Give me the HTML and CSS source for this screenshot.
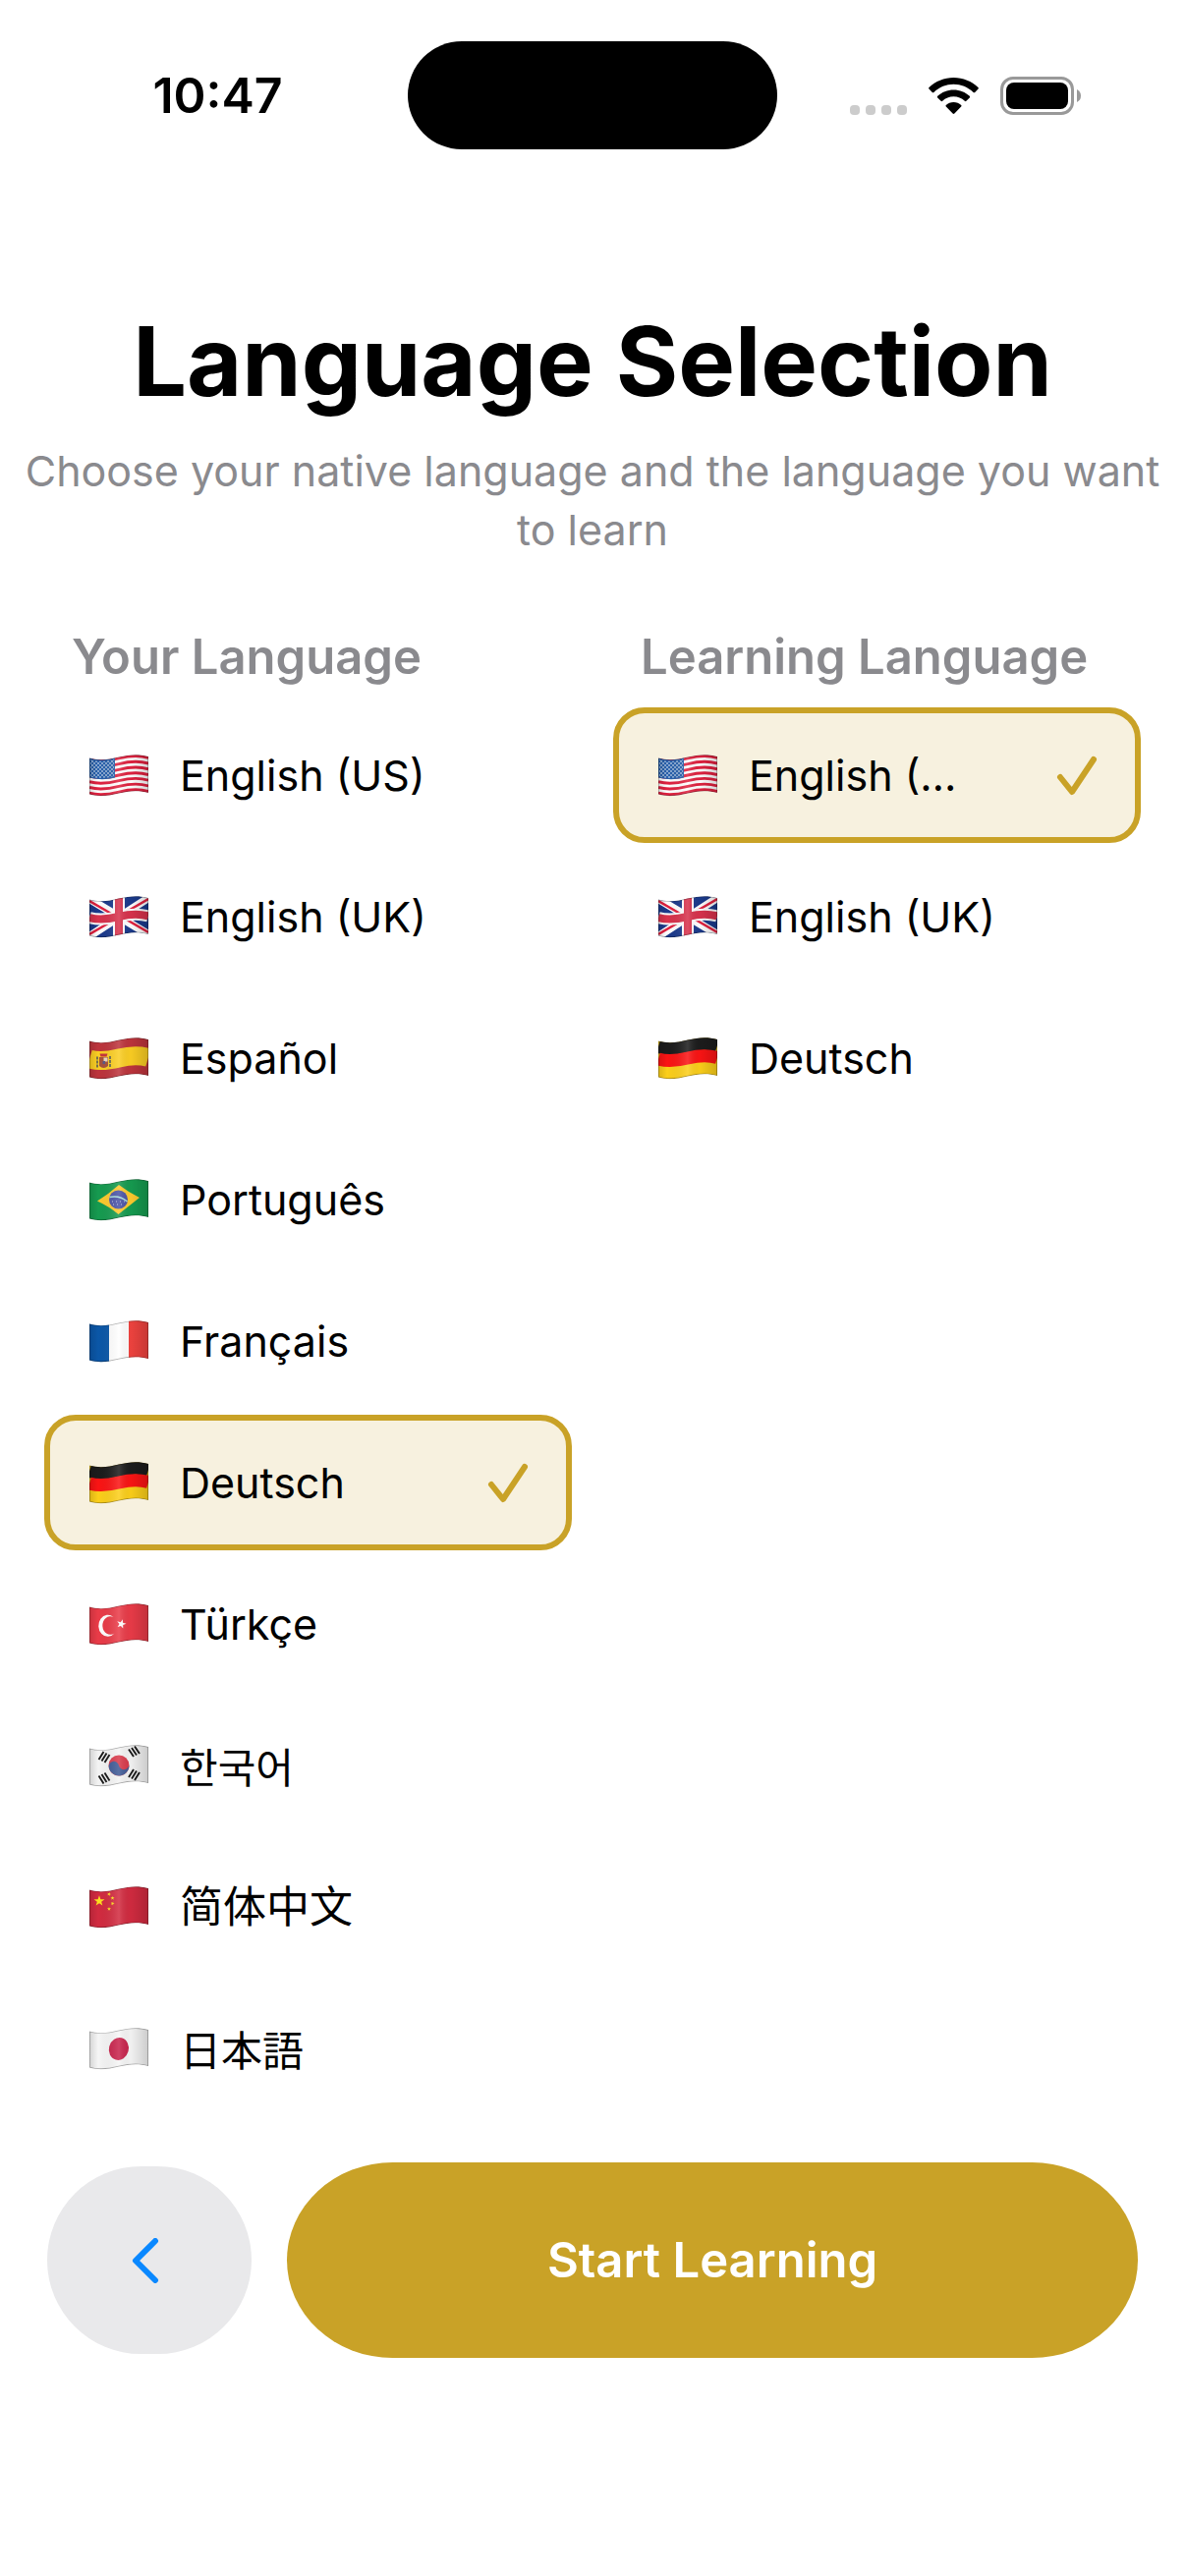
FILE: index.html
```html
<!doctype html>
<html lang="en">
<head>
    <meta charset="utf-8">
    <meta name="viewport" content="width=device-width, initial-scale=1">
    <title>Language Selection</title>
    <link rel="stylesheet" href="styles.css">
</head>
<body>
    <!-- Shared flag drawings -->
    <svg class="sprite" width="0" height="0" aria-hidden="true">
        <defs>
            <path id="wave" d="M0 3.5C10 6.5 20 5 30 2.5S50-1 60 2"/>
            <path id="cloth" d="M0 3.5C10 6.5 20 5 30 2.5S50-1 60 2V39C50 36 40 37 30 39.5S10 43.5 0 40.5Z"/>
            <path id="star" d="M0-5L1.2-1.6 4.8-1.5 1.9.6 2.9 4 0 2-2.9 4-1.9.6-4.8-1.5-1.2-1.6Z"/>
            <clipPath id="clip"><use href="#cloth"/></clipPath>
            <linearGradient id="light">
                <stop offset="0" stop-color="#000" stop-opacity=".14"/>
                <stop offset=".15" stop-color="#000" stop-opacity="0"/>
                <stop offset=".5" stop-color="#fff" stop-opacity=".14"/>
                <stop offset=".7" stop-color="#000" stop-opacity=".02"/>
                <stop offset="1" stop-color="#000" stop-opacity=".17"/>
            </linearGradient>
            <g id="shade">
                <use href="#cloth" fill="url(#light)"/>
                <use href="#cloth" fill="none" stroke="#000" stroke-opacity=".3" stroke-width="1.6"/>
            </g>
            <pattern id="stars" width="4" height="4" patternUnits="userSpaceOnUse">
                <circle cx="1" cy="1" r=".8" fill="#fff"/>
                <circle cx="3" cy="3" r=".8" fill="#fff"/>
            </pattern>
        </defs>
        <symbol id="us" viewBox="0 0 60 43">
            <g clip-path="url(#clip)">
                <use href="#cloth" fill="#fff"/>
                <g fill="none" stroke="#e0213f" stroke-width="2.9">
                    <use href="#wave" y="1.4"/>
                    <use href="#wave" y="7.1"/>
                    <use href="#wave" y="12.8"/>
                    <use href="#wave" y="18.5"/>
                    <use href="#wave" y="24.2"/>
                    <use href="#wave" y="29.9"/>
                    <use href="#wave" y="35.6"/>
                </g>
                <path fill="#2860ab" d="M0 3.5C10 6.5 18 5.5 26 3.5V23.5C18 25.5 10 26 0 23.5Z"/>
                <path fill="url(#stars)" d="M1 5C10 8 18 7 25 5V22C18 24 10 25 1 22.5Z"/>
                <use href="#shade"/>
            </g>
        </symbol>
        <symbol id="gb" viewBox="0 0 60 43">
            <g clip-path="url(#clip)">
                <use href="#cloth" fill="#1b3a8c"/>
                <path stroke="#fff" stroke-width="8" d="M0 3L60 39M0 41L60 2"/>
                <path stroke="#e0213f" stroke-width="2.6" d="M0 5L24 19M60 37L36 23M0 39L24 25M60 3L36 17"/>
                <g fill="none" stroke="#fff">
                    <path stroke-width="12" d="M30 0V43"/>
                    <use href="#wave" y="18.5" stroke-width="12"/>
                </g>
                <g fill="none" stroke="#d8324c">
                    <path stroke-width="8" d="M30 0V43"/>
                    <use href="#wave" y="18.5" stroke-width="8"/>
                </g>
                <use href="#shade"/>
            </g>
        </symbol>
        <symbol id="es" viewBox="0 0 60 43">
            <g clip-path="url(#clip)">
                <use href="#cloth" fill="#bd343c"/>
                <use href="#wave" y="18.5" fill="none" stroke="#fbce23" stroke-width="19"/>
                <path fill="#a8523c" d="M10 20h9v9q-4.5 4-9 0z"/>
                <path fill="#c7343c" d="M10.500 16.5h8l-1 3h-6z"/>
                <path fill="#ead9c0" d="M14.500 20.5h4v4h-4z"/>
                <path fill="#5a5a86" d="M13.500 24h2.5v3h-2.5z"/>
                <path stroke="#665" stroke-width="1.8" stroke-dasharray="3 1" d="M8 19.5v12M21 19v12"/>
                <use href="#shade"/>
            </g>
        </symbol>
        <symbol id="br" viewBox="0 0 60 43">
            <g clip-path="url(#clip)">
                <use href="#cloth" fill="#169b50"/>
                <path fill="#fdca2e" d="M8 22.500Q20 15 30 6 39 13 51 19 41 27 29.500 36 20 28 8 22.500Z"/>
                <circle cx="29.5" cy="21" r="9.5" fill="#4a53a6"/>
                <path fill="none" stroke="#a8e0dc" stroke-width="1.6" d="M20.500 18.500Q31 16.500 38.500 23"/>
                <path stroke="#c5c9e8" stroke-width="1" stroke-dasharray="1 3" d="M23 23h14M24 26h12"/>
                <use href="#shade"/>
            </g>
        </symbol>
        <symbol id="fr" viewBox="0 0 60 43">
            <g clip-path="url(#clip)">
                <path fill="#0b57a8" d="M0 0h20v43H0z"/>
                <path fill="#fff" d="M20 0h20v43H20z"/>
                <path fill="#f0433f" d="M40 0h20v43H40z"/>
                <use href="#shade"/>
            </g>
        </symbol>
        <symbol id="de" viewBox="0 0 60 43">
            <g clip-path="url(#clip)">
                <use href="#cloth" fill="#fccf1a"/>
                <g fill="none" stroke-width="13">
                    <use href="#wave" y="6" stroke="#1c1c1c"/>
                    <use href="#wave" y="18.5" stroke="#fb1414"/>
                </g>
                <use href="#shade"/>
            </g>
        </symbol>
        <symbol id="tr" viewBox="0 0 60 43">
            <g clip-path="url(#clip)">
                <use href="#cloth" fill="#ea3b48"/>
                <path fill="#fff" d="M24.500 14A9.500 11 0 1 0 25.500 30.500 8 9.300 0 1 1 24.500 14Z"/>
                <use href="#star" fill="#fff" transform="translate(32.5 21) rotate(15)"/>
                <use href="#shade"/>
            </g>
        </symbol>
        <symbol id="kr" viewBox="0 0 60 43">
            <g clip-path="url(#clip)">
                <use href="#cloth" fill="#f4f4f4"/>
                <circle cx="30" cy="21" r="10.5" fill="#d93a4b"/>
                <path fill="#3f5a96" d="M19.500 21a5.250 5.250 0 0 1 10.500 0 5.250 5.250 0 0 0 10.500 0 10.500 10.500 0 0 1-21 0Z" transform="rotate(-12 30 21)"/>
                <g stroke="#1a1a1a" stroke-width="1.9">
                    <path d="M9.500 15l5-8M12.500 16.500l5-8M15.500 18l5-8"/>
                    <path d="M40 4.500l5 7.500M43 3l5 7.500M46 1.500l5 7.500"/>
                    <path d="M9.500 31.500l5 8M12.500 30l5 8M15.500 28.500l5 8"/>
                    <path d="M40 33l5-8M43 34.500l5-8M46 36l5-8"/>
                </g>
                <use href="#shade"/>
            </g>
        </symbol>
        <symbol id="cn" viewBox="0 0 60 43">
            <g clip-path="url(#clip)">
                <use href="#cloth" fill="#d22b40"/>
                <g fill="#fde01f">
                    <use href="#star" transform="translate(10 15) scale(1.15)"/>
                    <use href="#star" transform="translate(20 8) scale(.42) rotate(20)"/>
                    <use href="#star" transform="translate(23.5 12) scale(.42)"/>
                    <use href="#star" transform="translate(23.5 17.5) scale(.42) rotate(20)"/>
                    <use href="#star" transform="translate(20 23) scale(.42)"/>
                </g>
                <use href="#shade"/>
            </g>
        </symbol>
        <symbol id="jp" viewBox="0 0 60 43">
            <g clip-path="url(#clip)">
                <use href="#cloth" fill="#f6f6f6"/>
                <ellipse cx="30" cy="21.5" rx="10" ry="11.5" fill="#c8234c" transform="rotate(15 30 21)"/>
                <use href="#shade"/>
            </g>
        </symbol>
        <symbol id="check" viewBox="0 0 42 42">
            <path fill="none" stroke="currentColor" stroke-width="6" stroke-linecap="round" stroke-linejoin="round" d="M4 23L16 38 38 5"/>
        </symbol>
    </svg>

    <header class="status-bar">
        <div class="time">10:47</div>
        <div class="island"></div>
        <div class="indicators">
            <svg width="58" height="10" viewBox="0 0 58 10" fill="#ccc">
                <rect width="10" height="10" rx="4"/>
                <rect x="16" width="10" height="10" rx="4"/>
                <rect x="32" width="10" height="10" rx="4"/>
                <rect x="48" width="10" height="10" rx="4"/>
            </svg>
            <svg width="51" height="38" viewBox="0 0 51 38">
                <path d="M25.500 0C35 0 44 3.700 50.500 10q.8.800 0 1.600l-3.300 3.300q-.8.700-1.600 0C40 9.700 33 6.800 25.500 6.800S11 9.700 5.400 14.900q-.8.700-1.600 0L.5 11.600q-.8-.8 0-1.600C7 3.700 16 0 25.500 0Z"/>
                <path d="M25.500 12.500c6.300 0 12 2.400 16.300 6.300q.8.800 0 1.600l-3.400 3.400q-.8.700-1.600 0c-3-2.800-7-4.500-11.300-4.500s-8.300 1.700-11.300 4.500q-.8.700-1.600 0l-3.400-3.400q-.8-.8 0-1.600c4.300-3.900 10-6.300 16.300-6.300Z"/>
                <path d="M25.500 25c3 0 5.700 1.100 7.700 2.900q.8.800 0 1.600l-6.800 7q-.9.900-1.800 0l-6.800-7q-.8-.8 0-1.600c2-1.800 4.700-2.900 7.700-2.900Z"/>
            </svg>
            <svg width="82" height="39" viewBox="0 0 82 39">
                <rect x="1.5" y="1.5" width="72" height="36" rx="11.5" fill="none" stroke="#999" stroke-width="3"/>
                <rect x="6" y="6" width="63" height="27" rx="8"/>
                <path fill="#999" d="M78 13q4 2 4 6.500T78 26Z"/>
            </svg>
        </div>
    </header>

    <main>
        <h1>Language Selection</h1>
        <p class="subtitle">Choose your native language and the language you want to learn</p>

        <form class="columns">
            <fieldset>
                <legend>Your Language</legend>
                <label class="option">
                    <input type="radio" name="native" value="en-US">
                    <svg class="flag"><use href="#us"/></svg>
                    <span class="name">English (US)</span>
                </label>
                <label class="option">
                    <input type="radio" name="native" value="en-GB">
                    <svg class="flag"><use href="#gb"/></svg>
                    <span class="name">English (UK)</span>
                </label>
                <label class="option">
                    <input type="radio" name="native" value="es">
                    <svg class="flag"><use href="#es"/></svg>
                    <span class="name" lang="es">Español</span>
                </label>
                <label class="option">
                    <input type="radio" name="native" value="pt">
                    <svg class="flag"><use href="#br"/></svg>
                    <span class="name" lang="pt">Português</span>
                </label>
                <label class="option">
                    <input type="radio" name="native" value="fr">
                    <svg class="flag"><use href="#fr"/></svg>
                    <span class="name" lang="fr">Français</span>
                </label>
                <label class="option selected">
                    <input type="radio" name="native" value="de" checked>
                    <svg class="flag"><use href="#de"/></svg>
                    <span class="name" lang="de">Deutsch</span>
                    <svg class="check"><use href="#check"/></svg>
                </label>
                <label class="option">
                    <input type="radio" name="native" value="tr">
                    <svg class="flag"><use href="#tr"/></svg>
                    <span class="name" lang="tr">Türkçe</span>
                </label>
                <label class="option">
                    <input type="radio" name="native" value="ko">
                    <svg class="flag"><use href="#kr"/></svg>
                    <span class="name" lang="ko">한국어</span>
                </label>
                <label class="option">
                    <input type="radio" name="native" value="zh">
                    <svg class="flag"><use href="#cn"/></svg>
                    <span class="name" lang="zh-Hans">简体中文</span>
                </label>
                <label class="option">
                    <input type="radio" name="native" value="ja">
                    <svg class="flag"><use href="#jp"/></svg>
                    <span class="name" lang="ja">日本語</span>
                </label>
            </fieldset>

            <fieldset>
                <legend>Learning Language</legend>
                <label class="option selected">
                    <input type="radio" name="learning" value="en-US" checked>
                    <svg class="flag"><use href="#us"/></svg>
                    <span class="name">English (US)</span>
                    <svg class="check"><use href="#check"/></svg>
                </label>
                <label class="option">
                    <input type="radio" name="learning" value="en-GB">
                    <svg class="flag"><use href="#gb"/></svg>
                    <span class="name">English (UK)</span>
                </label>
                <label class="option">
                    <input type="radio" name="learning" value="de">
                    <svg class="flag"><use href="#de"/></svg>
                    <span class="name" lang="de">Deutsch</span>
                </label>
            </fieldset>
        </form>
    </main>

    <footer class="actions">
        <button type="button" class="back" aria-label="Back">
            <svg width="28" height="46" viewBox="0 0 28 46">
                <path fill="none" stroke="currentColor" stroke-width="6" stroke-linecap="round" stroke-linejoin="round" d="M24 3L4 23 24 43"/>
            </svg>
        </button>
        <button type="button" class="start">Start Learning</button>
    </footer>
</body>
</html>
```

FILE: styles.css
```css
/* Reset */
* { box-sizing:border-box; padding:0; margin:0; }

/* CSS Variables */
:root {
    --gold: #c9a227;
    --gold-light: #f7f1df;
    --gray: #8a8a8e;
    --side: 45px;
}

/* Page Style */
body {
    background-color: #fff;
    color: #000;
    font-family: Inter, "Noto Sans CJK SC", sans-serif;
}
.sprite { position:absolute; }

/* Status Bar */
.status-bar {
    display: grid;
    grid-template-columns: 1fr 376px 1fr;
    align-items: center;
    padding-top: 42px;
}
.time {
    padding-left: 28px;
    font-size: 50px;
    font-weight: 600;
    line-height: 60px;
    text-align: center;
}
.island {
    height: 110px;
    border-radius: 55px;
    background-color: #000;
}
.indicators {
    display: flex;
    align-items: flex-end;
    justify-content: flex-end;
    gap: 22px;
    padding-right: 106px;
}

/* Heading */
h1 {
    margin-top: 155px;
    font-size: 97px;
    font-weight: 700;
    line-height: 122px;
    text-align: center;
}
.subtitle {
    margin-top: 20px;
    padding: 0 16px;
    color: var(--gray);
    font-size: 43px;
    line-height: 60px;
    text-align: center;
}

/* Language Lists */
.columns {
    display: grid;
    grid-template-columns: 1fr 1fr;
    gap: 42px;
    margin-top: 70px;
    padding: 0 var(--side);
}
fieldset {
    min-width: 0;
    border: 0;
}
legend {
    padding: 0 0 21px 28px;
    color: var(--gray);
    font-size: 49px;
    font-weight: 600;
    line-height: 60px;
    white-space: nowrap;
}
.option {
    display: flex;
    align-items: center;
    height: 138px;
    margin-bottom: 6px;
    padding: 0 38px 0 40px;
    border: 6px solid transparent;
    border-radius: 32px;
    cursor: pointer;
}
.option.selected {
    border-color: var(--gold);
    background-color: var(--gold-light);
}
.option input {
    appearance: none;
    width: 0;
    height: 0;
}
.flag {
    flex: none;
    width: 60px;
    height: 43px;
    margin-right: 32px;
}
.name {
    font-size: 43px;
    line-height: 60px;
    white-space: nowrap;
}
.name:lang(zh) { font-size:44px; }
.name:lang(ko) { font-family:"Noto Sans CJK KR", sans-serif; font-size:42px; }
.name:lang(ja) { font-family:"Noto Sans CJK JP", sans-serif; font-size:42px; }
.selected .name {
    margin-right: 92px;
    overflow: hidden;
    text-overflow: ellipsis;
}
.check {
    flex: none;
    width: 42px;
    height: 42px;
    margin-left: auto;
    color: var(--gold);
}

/* Buttons */
.actions {
    display: flex;
    align-items: center;
    gap: 36px;
    padding: 41px 48px;
}
button {
    border: 0;
    font-family: inherit;
    cursor: pointer;
}
.back {
    display: flex;
    align-items: center;
    justify-content: center;
    width: 208px;
    height: 191px;
    padding-right: 8px;
    border-radius: 100px;
    background-color: #e9e9eb;
    color: #0a88ff;
}
.start {
    flex: 1;
    height: 199px;
    border-radius: 108px / 100px;
    background-color: var(--gold);
    color: #fff;
    font-size: 49px;
    font-weight: 600;
}
```
